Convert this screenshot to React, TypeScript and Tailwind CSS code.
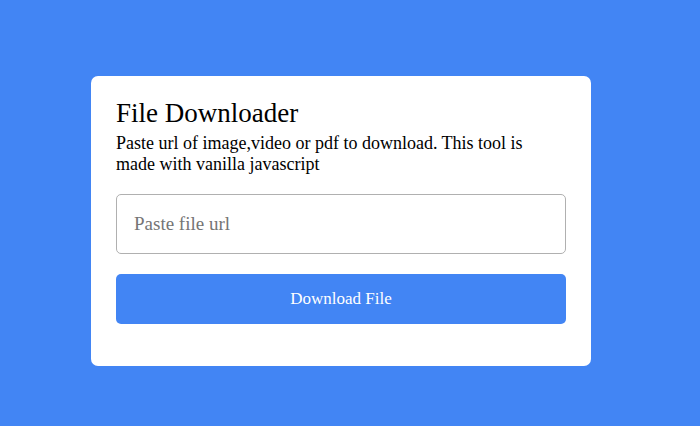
import { useState } from "react";

const App = () => {
  const [url, setUrl] = useState("");

  return (
    <div className="min-h-screen w-full bg-[#4285f4] pt-[76px] pl-[91px] font-['Liberation_Serif',serif]">
      <div className="w-[500px] h-[290px] bg-white rounded-[7px] px-[25px] pt-[22px]">
        <h1 className="text-[27px] leading-[30px] text-black">File Downloader</h1>
        <p className="mt-[5px] text-[18px] leading-[21px] text-black">
          Paste url of image,video or pdf to download. This tool is made with vanilla javascript
        </p>
        <form className="mt-[19px]" onSubmit={(e) => e.preventDefault()}>
          <input
            type="url"
            value={url}
            onChange={(e) => setUrl(e.target.value)}
            placeholder="Paste file url"
            className="block w-full h-[60px] border border-[#b0b0b0] rounded-[5px] px-[17px] text-[19px] text-black placeholder:text-[#757575] outline-none"
          />
          <button
            type="submit"
            className="mt-[20px] w-full h-[50px] rounded-[5px] bg-[#4285f4] text-white text-[17px]"
          >
            Download File
          </button>
        </form>
      </div>
    </div>
  );
};

export default App;
